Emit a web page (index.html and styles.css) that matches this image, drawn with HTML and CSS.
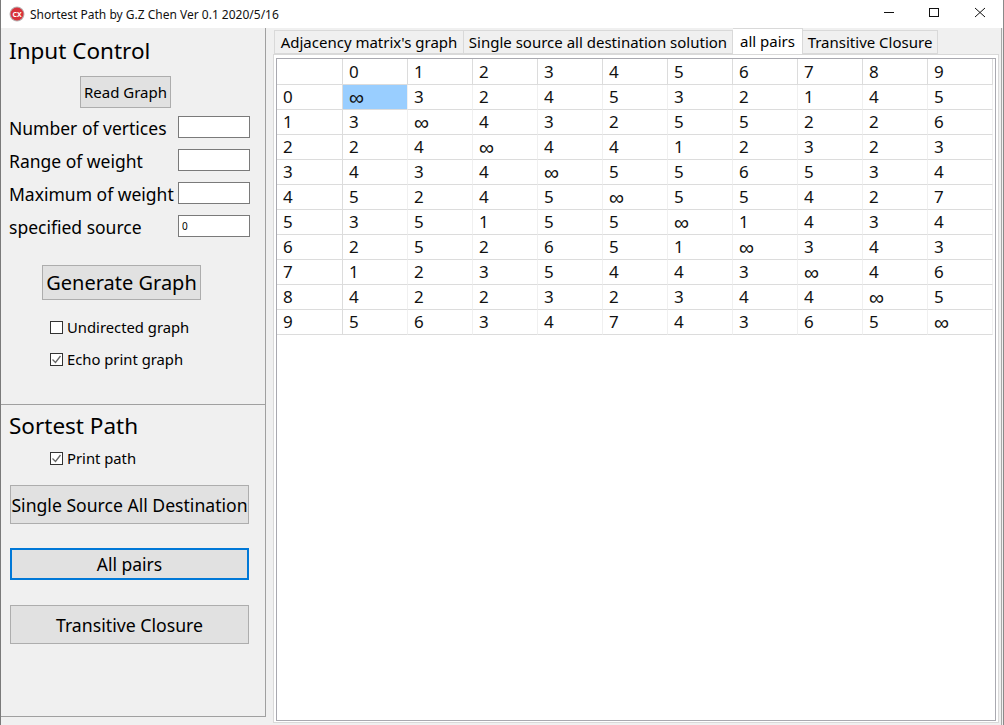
FILE: index.html
```html
<!doctype html>
<html lang="en">
<head>
    <meta charset="UTF-8">
    <title>Shortest Path</title>
    <link rel="stylesheet" href="styles.css">
</head>
<body>
<div class="titlebar">
    <svg class="appicon" width="16" height="16" viewBox="0 0 16 16">
        <circle cx="8" cy="8" r="7.5" fill="#b9b4b4"/>
        <circle cx="8" cy="8" r="6.5" fill="#d8323c"/>
        <text x="8" y="10.5" class="appicon-text" text-anchor="middle">CX</text>
    </svg>
    <span class="title">Shortest Path by G.Z Chen Ver 0.1 2020/5/16</span>
    <div class="winbtns">
        <svg width="46" height="28" viewBox="0 0 46 28"><path d="M18 12.5h10" stroke="#111" fill="none"/></svg>
        <svg width="46" height="28" viewBox="0 0 46 28"><rect x="17.5" y="8.5" width="9" height="8" stroke="#111" fill="none"/></svg>
        <svg width="46" height="28" viewBox="0 0 46 28"><path d="M17 8l10 9M27 8L17 17" stroke="#111" fill="none"/></svg>
    </div>
</div>
<div class="main">
    <div class="panel">
        <div class="section-top">
            <h2 class="heading">Input Control</h2>
            <button class="btn read-btn">Read Graph</button>
            <div class="field"><label>Number of vertices</label><input class="box" type="text"></div>
            <div class="field"><label>Range of weight</label><input class="box" type="text"></div>
            <div class="field"><label>Maximum of weight</label><input class="box" type="text"></div>
            <div class="field"><label>specified source</label><input class="box" type="text" value="0"></div>
            <button class="btn gen-btn">Generate Graph</button>
            <div class="check check-first"><span class="tick"></span>Undirected graph</div>
            <div class="check check-next">
                <span class="tick"><svg width="11" height="11" viewBox="0 0 11 11"><path d="M1.5 5.5l3 3 5-6.5" stroke="#666" stroke-width="1.3" fill="none"/></svg></span>Echo print graph
            </div>
        </div>
        <div class="section-bottom">
            <h2 class="heading">Sortest Path</h2>
            <div class="check check-print">
                <span class="tick"><svg width="11" height="11" viewBox="0 0 11 11"><path d="M1.5 5.5l3 3 5-6.5" stroke="#666" stroke-width="1.3" fill="none"/></svg></span>Print path
            </div>
            <button class="btn wide-btn single-btn">Single Source All Destination</button>
            <button class="btn wide-btn pairs-btn">All pairs</button>
            <button class="btn wide-btn closure-btn">Transitive Closure</button>
        </div>
    </div>
    <div class="right">
        <div class="tabs">
            <div class="tab tab-a">Adjacency matrix's graph</div>
            <div class="tab tab-b">Single source all destination solution</div>
            <div class="tab tab-active">all pairs</div>
            <div class="tab tab-d">Transitive Closure</div>
        </div>
        <div class="pane">
            <div class="grid-wrap">
                <table class="grid">
                    <tr><td></td><td>0</td><td>1</td><td>2</td><td>3</td><td>4</td><td>5</td><td>6</td><td>7</td><td>8</td><td>9</td></tr>
                    <tr><td>0</td><td class="inf sel">∞</td><td>3</td><td>2</td><td>4</td><td>5</td><td>3</td><td>2</td><td>1</td><td>4</td><td>5</td></tr>
                    <tr><td>1</td><td>3</td><td class="inf">∞</td><td>4</td><td>3</td><td>2</td><td>5</td><td>5</td><td>2</td><td>2</td><td>6</td></tr>
                    <tr><td>2</td><td>2</td><td>4</td><td class="inf">∞</td><td>4</td><td>4</td><td>1</td><td>2</td><td>3</td><td>2</td><td>3</td></tr>
                    <tr><td>3</td><td>4</td><td>3</td><td>4</td><td class="inf">∞</td><td>5</td><td>5</td><td>6</td><td>5</td><td>3</td><td>4</td></tr>
                    <tr><td>4</td><td>5</td><td>2</td><td>4</td><td>5</td><td class="inf">∞</td><td>5</td><td>5</td><td>4</td><td>2</td><td>7</td></tr>
                    <tr><td>5</td><td>3</td><td>5</td><td>1</td><td>5</td><td>5</td><td class="inf">∞</td><td>1</td><td>4</td><td>3</td><td>4</td></tr>
                    <tr><td>6</td><td>2</td><td>5</td><td>2</td><td>6</td><td>5</td><td>1</td><td class="inf">∞</td><td>3</td><td>4</td><td>3</td></tr>
                    <tr><td>7</td><td>1</td><td>2</td><td>3</td><td>5</td><td>4</td><td>4</td><td>3</td><td class="inf">∞</td><td>4</td><td>6</td></tr>
                    <tr><td>8</td><td>4</td><td>2</td><td>2</td><td>3</td><td>2</td><td>3</td><td>4</td><td>4</td><td class="inf">∞</td><td>5</td></tr>
                    <tr><td>9</td><td>5</td><td>6</td><td>3</td><td>4</td><td>7</td><td>4</td><td>3</td><td>6</td><td>5</td><td class="inf">∞</td></tr>
                </table>
            </div>
        </div>
    </div>
</div>
</body>
</html>
```
FILE: styles.css
```css
html, body {
    margin: 0;
    padding: 0;
    height: 100%;
}
body {
    width: 1004px;
    height: 725px;
    overflow: hidden;
    display: flex;
    flex-direction: column;
    background: #f0f0f0;
    font-family: "Noto Sans", "Liberation Sans", sans-serif;
    color: #000;
    box-sizing: border-box;
    border-left: 1px solid #7a7a7a;
    border-right: 1px solid #8a8a8a;
    position: relative;
}

/* dark bit of the window edge, something behind the window */
body::before {
    content: "";
    position: absolute;
    left: -1px;
    top: 650px;
    bottom: 0;
    width: 1px;
    background: #333;
}
body::after {
    content: "";
    position: absolute;
    right: -1px;
    top: 668px;
    bottom: 0;
    width: 1px;
    background: #333;
}

/* title bar */
.titlebar {
    height: 28px;
    flex: none;
    background: #fff;
    display: flex;
    align-items: center;
    padding-left: 8px;
}
.appicon {
    flex: none;
}
.appicon-text {
    font-size: 7px;
    font-weight: bold;
    fill: #fff;
}
.title {
    margin-left: 5px;
    font-size: 12px;
    color: #111;
}
.winbtns {
    margin-left: auto;
    display: flex;
    margin-right: -1px;
}

.main {
    flex: 1;
    display: flex;
    min-height: 0;
}

/* left panel */
.panel {
    width: 264px;
    height: 688px;
    flex: none;
    border-right: 1px solid #a0a0a0;
    border-bottom: 1px solid #a0a0a0;
    display: flex;
    flex-direction: column;
}
.section-top {
    height: 376px;
    flex: none;
    border-bottom: 1px solid #a0a0a0;
    display: flex;
    flex-direction: column;
    align-items: flex-start;
}
.heading {
    margin: 6px 0 0 8px;
    font-size: 22.5px;
    font-weight: normal;
    line-height: 34px;
}
.btn {
    background: #e1e1e1;
    border: 1px solid #adadad;
    font-family: inherit;
    color: #000;
    padding: 0;
    white-space: nowrap;
}
.read-btn {
    width: 91px;
    height: 32px;
    margin: 8px 0 8px 79px;
    font-size: 15px;
}
.field {
    display: flex;
    align-items: center;
    height: 22px;
    margin-bottom: 11px;
    width: 100%;
    font-size: 17.5px;
}
.field label {
    width: 169px;
    margin-left: 8px;
    padding-top: 2px;
    flex: none;
    white-space: nowrap;
}
.box {
    width: 72px;
    height: 22px;
    box-sizing: border-box;
    border: 1px solid #7a7a7a;
    background: #fff;
    padding: 0 3px;
    font-family: inherit;
    font-size: 10px;
}
.gen-btn {
    width: 159px;
    height: 35px;
    margin: 17px 0 0 41px;
    font-size: 20px;
}
.check {
    display: flex;
    align-items: center;
    height: 20px;
    margin-left: 49px;
    font-size: 14.8px;
}
.check-first {
    margin-top: 17px;
}
.check-next {
    margin-top: 12px;
}
.check-print {
    margin-top: 5px;
}
.tick {
    width: 13px;
    height: 13px;
    box-sizing: border-box;
    border: 1px solid #333;
    background: #fff;
    margin-right: 4px;
    flex: none;
    display: flex;
    align-items: center;
    justify-content: center;
}
.section-bottom {
    flex: 1;
    display: flex;
    flex-direction: column;
    align-items: flex-start;
}
.section-bottom .heading {
    margin-top: 4px;
}
.wide-btn {
    width: 239px;
    margin-left: 9px;
}
.single-btn {
    height: 39px;
    margin-top: 17px;
    font-size: 17.6px;
}
.pairs-btn {
    height: 32px;
    margin-top: 24px;
    font-size: 17.5px;
    border: 2px solid #0078d7;
}
.closure-btn {
    height: 39px;
    margin-top: 25px;
    font-size: 17.7px;
}

/* tabs and table */
.right {
    flex: 1;
    display: flex;
    flex-direction: column;
    padding: 1px 2px 2px 7px;
    margin-right: 1px;
    border-right: 1px solid #a8a8a8;
    min-width: 0;
}
.tabs {
    display: flex;
    align-items: flex-end;
    height: 25px;
    flex: none;
    padding-left: 1px;
    position: relative;
    z-index: 1;
}
.tab {
    height: 24px;
    box-sizing: border-box;
    background: #f0f0f0;
    border: 1px solid #d9d9d9;
    border-bottom: 1px solid #d9d9d9;
    border-left: 0;
    font-size: 15px;
    line-height: 22px;
    white-space: nowrap;
    display: flex;
    justify-content: center;
}
.tab-a {
    width: 190px;
    border-left: 1px solid #d9d9d9;
}
.tab-b {
    width: 269px;
}
.tab-active {
    width: 70px;
    height: 26px;
    background: #fff;
    border-bottom: 0;
    line-height: 24px;
    font-size: 15px;
}
.tab-d {
    width: 135px;
}
.pane {
    flex: 1;
    background: #fff;
    border: 1px solid #d9d9d9;
    padding: 3px 2px 1px 2px;
    min-height: 0;
    display: flex;
}
.grid-wrap {
    flex: 1;
    border: 1px solid #a9a9b0;
    background: #fff;
}
.grid {
    border-collapse: separate;
    border-spacing: 0;
    table-layout: fixed;
    width: 716px;
    font-size: 17px;
}
.grid td {
    height: 25px;
    width: 65px;
    box-sizing: border-box;
    padding: 0 0 0 6px;
    border-right: 1px solid #f0f0f0;
    border-bottom: 1px solid #dcdcdc;
    line-height: 24px;
    color: #111;
}
.grid td:first-child {
    width: 66px;
    border-right: 1px solid #dcdcdc;
}
.grid tr:first-child td {
    height: 26px;
    border-right: 1px solid #dcdcdc;
}
.grid .inf {
    font-size: 21px;
    line-height: 24px;
}
.grid .sel {
    background: #99ceff;
}
```
